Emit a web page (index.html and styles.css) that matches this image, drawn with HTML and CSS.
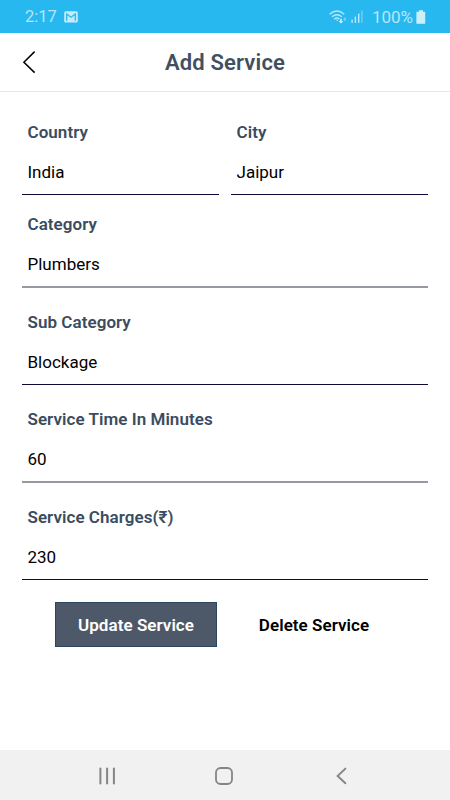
FILE: index.html
```html
<!DOCTYPE html>
<html lang="en">
<head>
    <meta charset="UTF-8">
    <meta name="viewport" content="width=device-width, initial-scale=1.0">
    <title>Add Service</title>
    <link rel="stylesheet" href="styles.css">
</head>
<body>

    <div class="status-bar">
        <span class="time">2:17</span>
        <svg class="mail-icon" width="14" height="12" viewBox="0 0 14 12">
            <rect x="0.2" y="0.2" width="13.6" height="11.4" rx="1.5" fill="#c4ebfb"/>
            <path d="M2.7 9.8V3L7 6.2 11.3 3v6.8" fill="none" stroke="#28b8f0" stroke-width="1.3"/>
        </svg>
        <svg class="wifi-icon" width="18" height="14" viewBox="0 0 18 14">
            <g fill="none" stroke="#b5e6fa" stroke-width="1.4">
                <path d="M0.6 4.2Q8 -2.2 15.2 4.2"/>
                <path d="M3 6.8Q8 2.5 12.8 6.8"/>
                <path d="M5.2 9.2Q8 6.8 10.4 9.2"/>
            </g>
            <path d="M7 9.8l1.2 1.4 1.2-1.4z" fill="#b5e6fa"/>
            <path d="M12 13.4L9.7 11h1.5V8.8h1.6V11h1.5z" fill="#d5f1fc"/>
            <path d="M15.8 7l-1.9 2.4h1.3v1.6h1.3V9.4h1.3z" fill="#78d0f5"/>
        </svg>
        <svg class="signal-icon" width="12" height="13" viewBox="0 0 12 13">
            <g fill="#bfe9fb">
                <rect x="0.4" y="9.6" width="1.4" height="3.2"/>
                <rect x="3.7" y="6.6" width="1.4" height="6.2"/>
                <rect x="7" y="3.6" width="1.4" height="9.2"/>
            </g>
            <rect x="10.2" y="0.5" width="1.4" height="12.3" fill="#72cef5"/>
        </svg>
        <span class="percent">100%</span>
        <svg class="battery-icon" width="10" height="14" viewBox="0 0 10 14">
            <path d="M3 0.2h4v1.6h2.2v11.9H0.4V1.8H3z" fill="#cdeffc"/>
        </svg>
    </div>

    <div class="header">
        <svg class="back-icon" width="14" height="24" viewBox="0 0 14 24">
            <path d="M12.6 1.6L1.9 12.2l10.7 10.4" fill="none" stroke="#000" stroke-width="1.5"/>
        </svg>
        <h1>Add Service</h1>
    </div>

    <div class="form">
        <div class="row">
            <div class="field">
                <label for="country">Country</label>
                <input type="text" id="country" value="India">
            </div>
            <div class="field">
                <label for="city">City</label>
                <input type="text" id="city" value="Jaipur">
            </div>
        </div>
        <div class="field soft">
            <label for="category">Category</label>
            <input type="text" id="category" value="Plumbers">
        </div>
        <div class="field">
            <label for="subCategory">Sub Category</label>
            <input type="text" id="subCategory" value="Blockage">
        </div>
        <div class="field soft">
            <label for="minutes">Service Time In Minutes</label>
            <input type="text" id="minutes" value="60">
        </div>
        <div class="field">
            <label for="charges">Service Charges(₹)</label>
            <input type="text" id="charges" value="230">
        </div>

        <div class="buttons">
            <button class="update-button">Update Service</button>
            <button class="delete-button">Delete Service</button>
        </div>
    </div>

    <div class="nav-bar">
        <svg class="recent-icon" width="18" height="18" viewBox="0 0 18 18">
            <path d="M2.4 1.5v15M9.1 1.5v15M15.9 1.5v15" fill="none" stroke="#858585" stroke-width="2" stroke-linecap="round"/>
        </svg>
        <svg class="home-icon" width="20" height="20" viewBox="0 0 20 20">
            <rect x="2" y="2" width="16" height="16" rx="4.5" fill="none" stroke="#858585" stroke-width="1.8"/>
        </svg>
        <svg class="nav-back-icon" width="12" height="18" viewBox="0 0 12 18">
            <path d="M9.4 1.6L1.6 9l7.8 7.2" fill="none" stroke="#858585" stroke-width="1.9" stroke-linecap="round"/>
        </svg>
    </div>

</body>
</html>
```
FILE: styles.css
```css
* {
    box-sizing: border-box;
}

body {
    display: flex;
    flex-direction: column;
    height: 800px;
    margin: 0;
    background-color: #fff;
    font-family: Roboto, "Noto Sans", sans-serif;
}

svg {
    display: block;
    flex: none;
}

.status-bar {
    display: flex;
    align-items: center;
    height: 33px;
    padding: 0 23px 0 25px;
    background-color: #28b8f0;
    color: #b5e6fa;
    font-size: 17px;
}

.time {
    width: 32px;
    font-size: 16.5px;
}

.mail-icon {
    margin-left: 7px;
}

.wifi-icon {
    margin-left: auto;
}

.signal-icon {
    margin-left: 4px;
}

.percent {
    margin-left: 9px;
}

.battery-icon {
    margin-left: 3px;
    margin-right: 1px;
}

.header {
    display: flex;
    align-items: center;
    height: 59px;
    padding: 0 36px 0 22px;
    border-bottom: 1px solid #e9e9e9;
}

h1 {
    flex: 1;
    margin: 0;
    padding-top: 2px;
    color: #40505f;
    font-size: 22px;
    font-weight: 600;
    line-height: 26px;
    letter-spacing: 0.15px;
    text-align: center;
}

.form {
    flex: 1;
    padding: 30px 22px 0;
}

.row {
    display: flex;
    gap: 12px;
    margin-bottom: 19px;
}

.row .field {
    flex: 1;
    margin-bottom: 0;
}

.field {
    min-width: 0;
    margin-bottom: 24px;
    border-bottom: 1px solid #0c0a38;
}

.soft {
    border-bottom: 2px solid #9599a1;
}

label {
    display: block;
    padding-left: 5.5px;
    color: #3b4c5e;
    font-size: 17px;
    font-weight: 600;
    line-height: 20px;
    letter-spacing: 0.05px;
}

input {
    display: block;
    width: 100%;
    height: 20px;
    margin: 20px 0 12px;
    padding: 0 5.5px;
    border: none;
    outline: none;
    background: none;
    color: #000;
    font-family: inherit;
    font-size: 17px;
}

.buttons {
    display: flex;
    margin-top: -2px;
    padding-left: 33px;
}

button {
    width: 162px;
    height: 45px;
    padding: 0;
    border: none;
    background: none;
    font-family: inherit;
    font-size: 17px;
    font-weight: 600;
    letter-spacing: 0.05px;
    cursor: pointer;
}

.update-button {
    border: 1px solid #2c4560;
    background-color: #4d5968;
    color: #fff;
}

.delete-button {
    margin-left: 16px;
    color: #000;
}

.nav-bar {
    display: flex;
    align-items: center;
    height: 50px;
    padding: 2px 102px 0 98px;
    justify-content: space-between;
    background-color: #f1f1f1;
}

.home-icon {
    margin-right: 4px;
}
```
